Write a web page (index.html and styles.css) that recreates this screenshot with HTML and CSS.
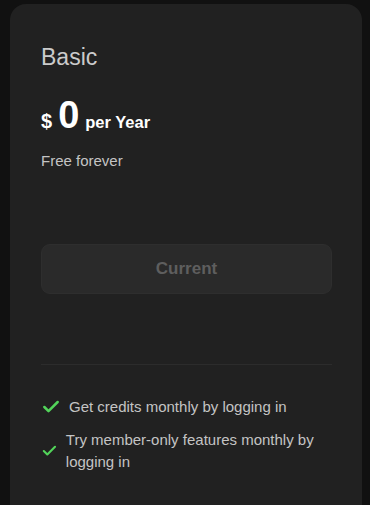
FILE: index.html
```html
<!DOCTYPE html>
<html lang="en">
<head>
    <meta charset="utf-8" />
    <meta name="viewport" content="width=device-width, initial-scale=1.0" />
    <title>Pricing</title>
    <link rel="stylesheet" href="styles.css">
</head>
<body>
    <div class="plan-card">
        <h2 class="plan-name">Basic</h2>
        <div class="plan-price">
            <span class="currency">$</span>
            <span class="amount">0</span>
            <span class="period">per Year</span>
        </div>
        <p class="plan-desc">Free forever</p>

        <button class="plan-button" disabled>Current</button>

        <hr class="plan-divider">

        <ul class="plan-features">
            <li class="feature">
                <svg class="check" viewBox="0 0 24 24" width="20" height="20" fill="none" stroke="currentColor" stroke-width="3" stroke-linecap="round" stroke-linejoin="round"><path d="M20 6 9 17l-5-5"/></svg>
                <span>Get credits monthly by logging in</span>
            </li>
            <li class="feature">
                <svg class="check" viewBox="0 0 24 24" width="20" height="20" fill="none" stroke="currentColor" stroke-width="3" stroke-linecap="round" stroke-linejoin="round"><path d="M20 6 9 17l-5-5"/></svg>
                <span>Try member-only features monthly by logging in</span>
            </li>
        </ul>
    </div>
</body>
</html>
```

FILE: styles.css
```css
html, body {
    background-color: #111111;
}
body {
    margin: 4px 8px 0 10px;
    font-family: "Liberation Sans", Arial, sans-serif;
    color: #c8c8c8;
    overflow: hidden;
}
.plan-card {
    background-color: #212121;
    border-radius: 16px 16px 0 0;
    padding: 39px 30px 32px 31px;
}
.plan-name {
    margin: 0;
    font-size: 23px;
    line-height: 28px;
    font-weight: normal;
    color: #cbcbcb;
}
.plan-price {
    display: flex;
    align-items: baseline;
    gap: 6px;
    margin-top: 25px;
    color: #ffffff;
    font-weight: bold;
    line-height: 1;
}
.currency {
    font-size: 20px;
}
.amount {
    font-size: 38px;
}
.period {
    font-size: 16.5px;
}
.plan-desc {
    margin: 17px 0 0;
    font-size: 15px;
    line-height: 20px;
    color: #c4c4c4;
}
.plan-button {
    display: block;
    width: 100%;
    height: 50px;
    margin-top: 73px;
    background-color: #2a2a2a;
    border: 1px solid #2e2e2e;
    border-radius: 9px;
    font-family: inherit;
    font-size: 17px;
    font-weight: bold;
    color: #5e5e5e;
}
.plan-divider {
    margin: 70px 0 0;
    border: none;
    border-top: 1px solid #2c2c2c;
}
.plan-features {
    list-style: none;
    margin: 31px 0 0;
    padding: 0;
    display: flex;
    flex-direction: column;
    gap: 11px;
}
.feature {
    display: flex;
    align-items: center;
    gap: 8px;
    font-size: 15px;
    line-height: 22px;
    color: #c4c4c4;
}
.check {
    min-width: 0;
    flex-shrink: 1;
    color: #52d45a;
}
```
